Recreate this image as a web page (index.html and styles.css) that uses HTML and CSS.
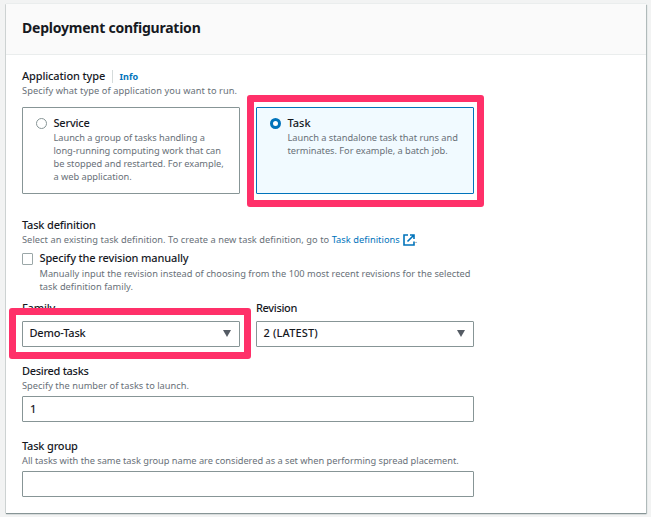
FILE: index.html
```html
<!DOCTYPE html>
<html lang="en">
<head>
<meta charset="utf-8">
<title>Deployment configuration</title>
<link rel="stylesheet" href="styles.css">
</head>
<body>
<section class="panel">
  <header class="panel-header"><h2>Deployment configuration</h2></header>
  <div class="panel-body">
    <div class="field type-field">
      <div class="label-row"><span class="label type-label">Application type</span><a class="info">Info</a></div>
      <p class="hint type-hint">Specify what type of application you want to run.</p>
      <div class="columns tiles">
        <div class="tile">
          <span class="radio"></span>
          <div>
            <div class="label service-label">Service</div>
            <p class="hint tile-hint">Launch a group of tasks handling a<br>long-running computing work that can<br>be stopped and restarted. For example,<br>a web application.</p>
          </div>
        </div>
        <div class="tile selected">
          <span class="radio"></span>
          <div>
            <div class="label">Task</div>
            <p class="hint tile-hint">Launch a standalone task that runs and<br>terminates. For example, a batch job.</p>
          </div>
          <span class="highlight highlight-task"></span>
        </div>
      </div>
    </div>

    <div class="field definition-field">
      <div class="label tight">Task definition</div>
      <p class="hint select-hint">Select an existing task definition. To create a new task definition, go to <a class="link">Task definitions<svg class="external" viewBox="0 0 12 12"><path d="M5 1H1v10h10V7.5M7 1h4v4M11 1L4.5 7.5"/></svg></a>.</p>
      <div class="check-row">
        <span class="checkbox"></span>
        <div>
          <div class="label manual-label">Specify the revision manually</div>
          <p class="hint manual-hint">Manually input the revision instead of choosing from the 100 most recent revisions for the selected<br>task definition family.</p>
        </div>
      </div>
    </div>

    <div class="columns selects">
      <div>
        <div class="label tight">Family</div>
        <div class="select"><span class="demo">Demo-Task</span><span class="caret"></span><span class="highlight highlight-family"></span></div>
      </div>
      <div>
        <div class="label revision-label">Revision</div>
        <div class="select"><span class="latest">2 (LATEST)</span><span class="caret"></span></div>
      </div>
    </div>

    <div class="field desired-field">
      <div class="label desired-label">Desired tasks</div>
      <p class="hint desired-hint">Specify the number of tasks to launch.</p>
      <div class="input">1</div>
    </div>

    <div class="field">
      <div class="label tight">Task group</div>
      <p class="hint group-hint">All tasks with the same task group name are considered as a set when performing spread placement.</p>
      <div class="input"></div>
    </div>
  </div>
</section>
</body>
</html>
```
FILE: styles.css
```css
* { box-sizing: border-box; }
body {
  margin: 0;
  padding: 4px 4px 4px 6px;
  height: 517px;
  overflow: hidden;
  background: #f2f3f3;
  color: #16191f;
  font-family: "Noto Sans", sans-serif;
}
h2, p { margin: 0; }
.panel {
  width: 640px;
  height: 509px;
  background: #fff;
  box-shadow: 0 1px 1px #879596, 1px 1px 1px #b9c2c2, -1px 0 0 #dbdfdf, 0 -1px 0 #eaeded;
}
.panel-header {
  height: 51px;
  padding: 14px 16px 0;
  background: #fafafa;
  border-bottom: 1px solid #eaeded;
}
h2 { font-size: 14px; line-height: 20px; font-weight: 700; letter-spacing: -0.23px; }
.panel-body { width: 484px; padding: 13px 16px 0; }

.label { font-size: 11px; line-height: 16px; font-weight: 500; white-space: nowrap; }
.tight { letter-spacing: -0.19px; }
.type-label { letter-spacing: -0.14px; }
.service-label { letter-spacing: -0.21px; }
.manual-label { letter-spacing: -0.14px; }
.revision-label { letter-spacing: -0.34px; }
.desired-label { letter-spacing: -0.3px; }

.hint { font-size: 9.25px; line-height: 13px; color: #687078; white-space: nowrap; }
.type-hint { letter-spacing: 0.075px; }
.tile-hint { letter-spacing: -0.03px; }
.select-hint { letter-spacing: 0.045px; }
.manual-hint { letter-spacing: 0.02px; }
.desired-hint { letter-spacing: 0.03px; }
.group-hint { letter-spacing: -0.02px; }

.label-row { display: flex; align-items: center; height: 16px; }
.info {
  margin-left: 7px;
  padding-left: 6.5px;
  border-left: 1px solid #d5dbdb;
  font-size: 9px;
  line-height: 13px;
  font-weight: 700;
  color: #0073bb;
}
.columns { display: grid; grid-template-columns: 218px 218px; column-gap: 16px; }
.tiles { margin-top: 10px; }
.tile {
  position: relative;
  display: flex;
  height: 87px;
  padding: 7px 0 0 13px;
  border: 1px solid #879596;
  border-radius: 1px;
}
.selected { background: #f1faff; border-color: #0073bb; }
.radio {
  flex: none;
  width: 11px;
  height: 11px;
  margin: 3px 6.5px 0 0;
  border: 1px solid #879596;
  border-radius: 50%;
  background: #fff;
}
.selected .radio { border: 3px solid #0073bb; }

.highlight { position: absolute; border: 7px solid #ff3069; border-radius: 3px; }
.highlight-task { inset: -13px -11px -14px -10px; }
.highlight-family { inset: -14px -12px -13px -14px; }

.definition-field { margin-top: 23px; }
.link { color: #0073bb; }
.external {
  width: 12px;
  height: 12px;
  margin-left: 3px;
  vertical-align: -3px;
  fill: none;
  stroke: #0073bb;
  stroke-width: 1.6;
}
.select-hint { height: 13px; }
.check-row { display: flex; margin-top: 4px; }
.checkbox {
  flex: none;
  width: 11px;
  height: 12px;
  margin: 3px 6.5px 0 0;
  border: 1px solid #9ba7a8;
  border-radius: 1px;
}
.manual-hint { margin-top: 1px; }

.selects { margin-top: 7px; }
.select {
  position: relative;
  display: flex;
  align-items: center;
  justify-content: space-between;
  height: 26px;
  margin-top: 5px;
  padding: 0 8.5px 2px 6.5px;
  border: 1px solid #879596;
  border-radius: 1px;
  font-size: 11px;
  line-height: 16px;
  font-weight: 500;
}
.demo { letter-spacing: -0.18px; }
.latest { letter-spacing: 0.16px; }
.caret {
  margin-top: 1px;
  border: 4.5px solid transparent;
  border-top: 7px solid #545b64;
  border-bottom: 0;
}
.desired-field { margin: 16px 0; }
.input {
  height: 26px;
  margin-top: 4px;
  padding: 4px 7px;
  border: 1px solid #879596;
  border-radius: 1px;
  font-size: 11px;
  line-height: 16px;
  font-weight: 500;
}
```
